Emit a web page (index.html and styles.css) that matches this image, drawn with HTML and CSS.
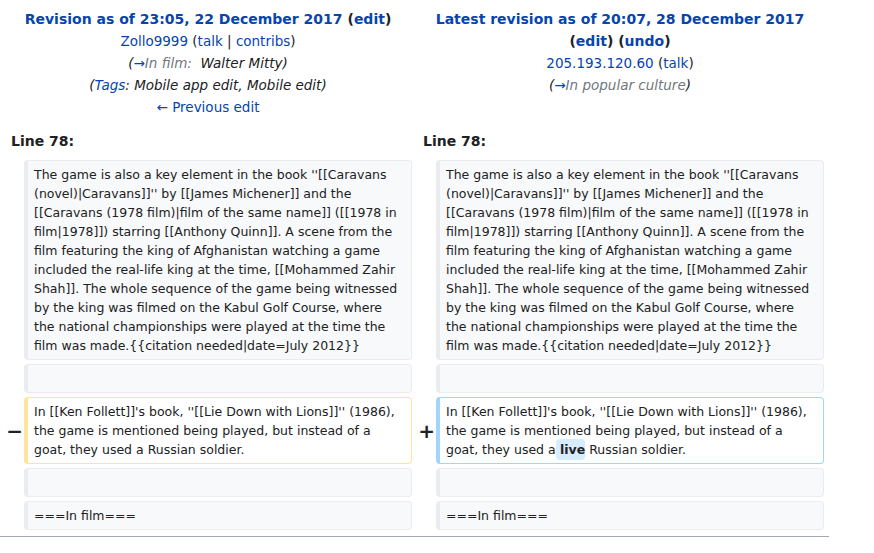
FILE: index.html
```html
<!DOCTYPE html>
<html>
<head>
<meta charset="utf-8">
<link rel="stylesheet" href="styles.css">
</head>
<body>
<div class="diff">
  <div class="otitle">
    <div class="title-line"><a class="rev">Revision as of 23:05, 22 December 2017</a> <span class="paren">(<a>edit</a>)</span></div>
    <div><a>Zollo9999</a> (<a>talk</a> | <a>contribs</a>)</div>
    <div class="comment">(<a>→</a><span class="auto">In film:</span>&nbsp; Walter Mitty)</div>
    <div class="comment">(<a>Tags</a>: Mobile app edit, Mobile edit)</div>
    <div><a>← Previous edit</a></div>
  </div>
  <div class="ntitle">
    <div class="title-line"><a class="rev">Latest revision as of 20:07, 28 December 2017</a> <span class="paren">(<a>edit</a>)</span> <span class="paren">(<a>undo</a>)</span></div>
    <div><a>205.193.120.60</a> (<a>talk</a>)</div>
    <div class="comment">(<a>→</a><span class="auto">In popular culture</span>)</div>
  </div>

  <div class="lineno">Line 78:</div>
  <div class="lineno">Line 78:</div>

  <div class="marker"></div>
  <div class="content context">The game is also a key element in the book ''[[Caravans (novel)|Caravans]]'' by [[James Michener]] and the [[Caravans (1978 film)|film of the same name]] ([[1978 in film|1978]]) starring [[Anthony Quinn]]. A scene from the film featuring the king of Afghanistan watching a game included the real-life king at the time, [[Mohammed Zahir Shah]]. The whole sequence of the game being witnessed by the king was filmed on the Kabul Golf Course, where the national championships were played at the time the film was made.{{citation needed|date=July 2012}}</div>
  <div class="marker"></div>
  <div class="content context">The game is also a key element in the book ''[[Caravans (novel)|Caravans]]'' by [[James Michener]] and the [[Caravans (1978 film)|film of the same name]] ([[1978 in film|1978]]) starring [[Anthony Quinn]]. A scene from the film featuring the king of Afghanistan watching a game included the real-life king at the time, [[Mohammed Zahir Shah]]. The whole sequence of the game being witnessed by the king was filmed on the Kabul Golf Course, where the national championships were played at the time the film was made.{{citation needed|date=July 2012}}</div>

  <div class="marker"></div>
  <div class="content context"><br></div>
  <div class="marker"></div>
  <div class="content context"><br></div>

  <div class="marker"><span class="sign">−</span></div>
  <div class="content deleted">In [[Ken Follett]]'s book, ''[[Lie Down with Lions]]'' (1986), the game is mentioned being played, but instead of a goat, they used a Russian soldier.</div>
  <div class="marker"><span class="sign">+</span></div>
  <div class="content added">In [[Ken Follett]]'s book, ''[[Lie Down with Lions]]'' (1986), the game is mentioned being played, but instead of a goat, they used a<ins class="inline"> live</ins> Russian soldier.</div>

  <div class="marker"></div>
  <div class="content context"><br></div>
  <div class="marker"></div>
  <div class="content context"><br></div>

  <div class="marker"></div>
  <div class="content context">===In film===</div>
  <div class="marker"></div>
  <div class="content context">===In film===</div>
</div>
<div class="rule"></div>
</body>
</html>
```

FILE: styles.css
```css
html, body {
  margin: 0;
  padding: 0;
  background: #ffffff;
}
body {
  font-family: "DejaVu Sans", sans-serif;
  color: #202122;
}
a {
  color: #0645ad;
  text-decoration: none;
}
.diff {
  width: 829px;
  box-sizing: border-box;
  padding: 4px;
  display: grid;
  grid-template-columns: 16px 388px 16px 388px;
  column-gap: 4px;
  row-gap: 4px;
}
.otitle, .ntitle {
  grid-column: span 2;
  text-align: center;
  font-size: 13.5px;
  line-height: 22px;
  padding: 4px 0;
}
.title-line {
  font-weight: bold;
  font-size: 14px;
}
.comment {
  font-style: italic;
}
.auto {
  color: #72777d;
}
.lineno {
  grid-column: span 2;
  font-weight: bold;
  font-size: 14px;
  line-height: 22px;
  padding: 4px 7px;
}
.marker {
  font-weight: bold;
  font-size: 20px;
  display: flex;
  align-items: center;
  justify-content: flex-end;
}
.sign {
  margin-right: -3px;
}
.content {
  font-size: 12.5px;
  line-height: 19px;
  padding: 4px 6px;
  border: 1px solid #eaecf0;
  border-left-width: 4px;
  border-radius: 4px;
  word-wrap: break-word;
  min-width: 0;
}
.context {
  background: #f8f9fa;
}
.deleted {
  border-color: #ffe49c;
  background: #ffffff;
}
.added {
  border-color: #a3d3ff;
  background: #ffffff;
}
.inline {
  text-decoration: none;
  font-weight: bold;
  background: #d8ecff;
  border-radius: 4px;
  padding: 3px 0;
}
.rule {
  width: 829px;
  height: 1px;
  background: #a2a9b1;
  margin-top: 2px;
}
```
